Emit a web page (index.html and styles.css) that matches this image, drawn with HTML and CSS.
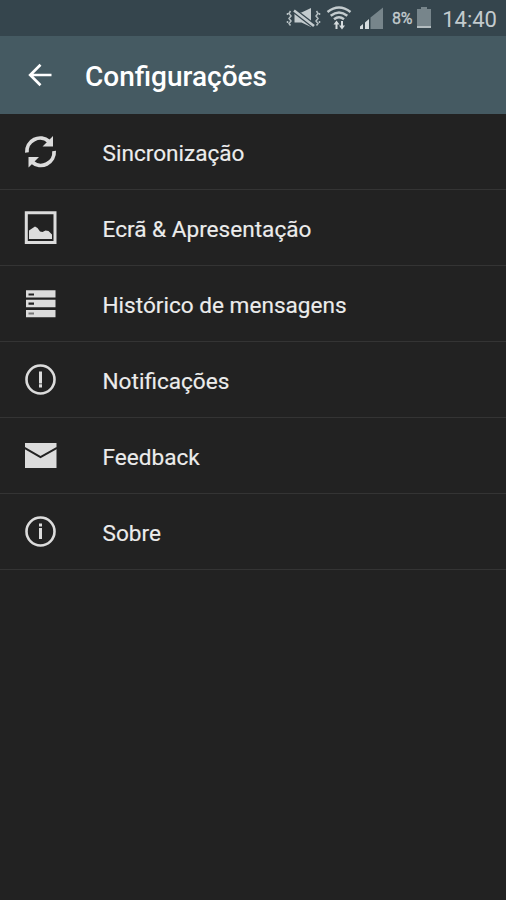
FILE: index.html
```html
<!DOCTYPE html>
<html lang="pt">
<head>
<meta charset="utf-8">
<title>Configurações</title>
<link rel="stylesheet" href="styles.css">
</head>
<body>
<div class="status">
  <svg class="status-icons" width="104" height="36" viewBox="0 0 104 36">
    <g fill="none" stroke="#b4bec1" stroke-width="1.500">
      <path d="M4.500 11l-1.500 2.500 2 2.500-2 2.500 2 2.500-2 2.500 1.500 2M1.500 13v2M1.500 21v2"/>
      <path d="M30.500 11l1.500 2.500-2 2.500 2 2.500-2 2.500 2 2.500-1.500 2M33.500 13v2M33.500 21v2"/>
    </g>
    <path d="M8.500 12.500h7l9.500-4.500v19l-9.500-4.500h-7z" fill="#c3cbce"/>
    <path d="M8 10.500L28 26" stroke="#35454d" stroke-width="5"/>
    <path d="M8 10.500L28 26" stroke="#c3cbce" stroke-width="2.600"/>
    <g fill="none" stroke="#c3cbce" stroke-width="2.500">
      <path d="M41.500 12q11.500-9 23 0M44.700 15.800q8.300-6.500 16.600 0M48 19.200q5-4 10 0"/>
    </g>
    <path d="M50.500 20.500l3 4h-2v4.500h-2v-4.500h-2zM56 29.500l-3-4h2v-4.500h2v4.500h2z" fill="#d6dcde"/>
    <path d="M74 29v-2.500l3-2.500v5zM79 29v-6.500l4-3.500v10z" fill="#d6dcde"/>
    <path d="M84.500 29V17.500l5-4V29zM89.500 29V13.500l7.500-6V29z" fill="#77858b"/>
  </svg>
  <span class="percent">8%</span>
  <svg class="battery" width="16" height="36" viewBox="0 0 16 36">
    <path d="M1 9h4V7h6v2h4v19H1z" fill="#77858b"/><path d="M1 26h14v2H1z" fill="#b4bdc0"/>
  </svg>
  <span class="clock">14:40</span>
</div>
<header class="toolbar">
  <svg class="back" width="26" height="26" viewBox="0 0 26 26">
    <path d="M24.500 13H3M13.500 2.800L3.200 13l10.300 10.200" fill="none" stroke="#fff" stroke-width="2.700"/>
  </svg>
  <h1 class="title">Configurações</h1>
</header>
<main class="list">
  <div class="row">
    <svg class="icon" viewBox="0 0 36 36">
      <path d="M4.900 18.500A13.300 13.300 0 0 1 27 7.500M32.100 17A13.300 13.300 0 0 1 10 28" fill="none" stroke="#dcdcdc" stroke-width="3.800"/>
      <path d="M31 2v10.500H20.500zM6.500 33.500V23h10.500z" fill="#dcdcdc"/>
    </svg>
    <span class="label">Sincronização</span>
  </div>
  <div class="row">
    <svg class="icon" viewBox="0 0 36 36">
      <path d="M4.300 2.800h28.700v29.700H4.300z" fill="none" stroke="#dcdcdc" stroke-width="3"/>
      <path d="M7 29V20.500l3-2 3-2 2.500 1.500 2.500 3.500 2.500.5 3-1.500 3 .5 3.500 3.500V29z" fill="#dcdcdc"/>
    </svg>
    <span class="label">Ecrã &amp; Apresentação</span>
  </div>
  <div class="row">
    <svg class="icon" viewBox="0 0 36 36">
      <path d="M4 4.200h29.500v7.300H4zM4 13.800h29.500v7.500H4zM4 24h29.500v7.300H4z" fill="#dcdcdc"/>
      <path d="M6.500 7.400h5.500v2.200H6.500zM6.500 16.500h5.500v2.200H6.500z" fill="#222"/><path d="M6.500 26.500h5.500v2H6.500z" fill="#777"/>
    </svg>
    <span class="label">Histórico de mensagens</span>
  </div>
  <div class="row">
    <svg class="icon" viewBox="0 0 36 36">
      <circle cx="18.500" cy="17.500" r="14" fill="none" stroke="#dcdcdc" stroke-width="2.600"/>
      <path d="M17 9.500h3v12h-3zM17 22.300h3v3.200h-3z" fill="#dcdcdc"/>
    </svg>
    <span class="label">Notificações</span>
  </div>
  <div class="row">
    <svg class="icon" viewBox="0 0 36 36">
      <path d="M3 5h31.500v25H3z" fill="#dcdcdc"/>
      <path d="M2.500 9.800L18.500 19l16.500-9.200" fill="none" stroke="#222" stroke-width="2"/>
    </svg>
    <span class="label">Feedback</span>
  </div>
  <div class="row">
    <svg class="icon" viewBox="0 0 36 36">
      <circle cx="18.500" cy="17.500" r="14" fill="none" stroke="#dcdcdc" stroke-width="2.600"/>
      <path d="M17 9.500h3v3h-3zM17 14h3v11h-3z" fill="#dcdcdc"/>
    </svg>
    <span class="label">Sobre</span>
  </div>
</main>
</body>
</html>
```
FILE: styles.css
```css
body {
  margin: 0;
  min-height: 900px;
  background: #222;
  font-family: Roboto, "Liberation Sans", sans-serif;
}
.status {
  display: flex;
  justify-content: flex-end;
  height: 36px;
  padding-right: 9px;
  box-sizing: border-box;
  background: #35454d;
  color: #c3cbce;
  line-height: 38px;
}
.status-icons, .battery, .back, .icon { display: block; flex: none; }
.percent { margin-left: 2px; font-size: 16px; letter-spacing: -0.3px; -webkit-text-stroke: 0.3px; }
.battery { margin-left: 4px; }
.clock { margin-left: 10px; font-size: 22px; line-height: 39px; }
.toolbar {
  display: flex;
  align-items: center;
  height: 78px;
  padding: 0 26px 0 27px;
  background: #455a62;
}
.title {
  margin: 3px 0 0 32px;
  color: #fff;
  font-size: 28px;
  font-weight: 500;
  line-height: 36px;
}
.row {
  display: flex;
  align-items: flex-start;
  box-sizing: border-box;
  height: 76px;
  padding: 20px 22px 0;
  border-bottom: 1px solid #343434;
}
.icon { width: 36px; height: 36px; }
.label {
  margin-left: 44.5px;
  color: #ececec;
  font-size: 22.6px;
  line-height: 39px;
  white-space: nowrap;
  -webkit-text-stroke: 0.15px;
}
```
